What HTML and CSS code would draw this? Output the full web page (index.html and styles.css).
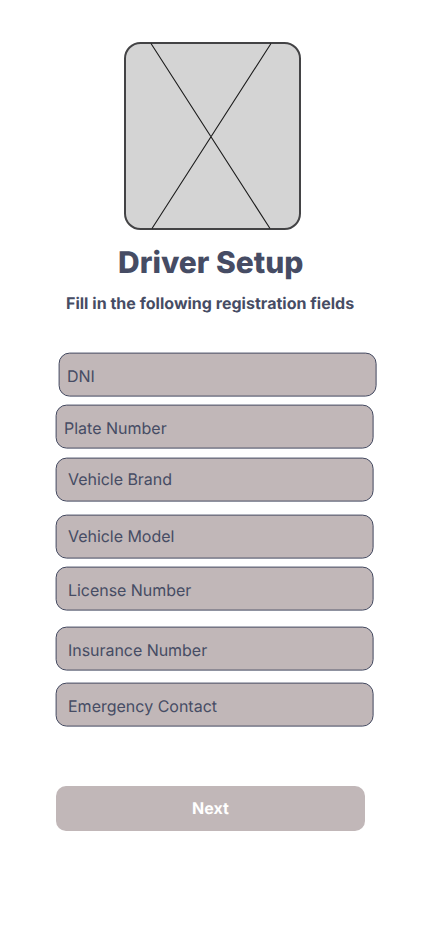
FILE: index.html
```html
<!DOCTYPE html>
<html lang="en">
<head>
<meta charset="utf-8">
<title>Driver Setup</title>
<link rel="stylesheet" href="styles.css">
</head>
<body>
<main class="screen">
  <svg class="photo" viewBox="0 0 177 188" aria-hidden="true">
    <rect class="frame" x="1" y="1" width="175" height="186" rx="15.500"/>
    <path class="cross" d="M27 1.5 146 186.500M147 1.500 28 186.500"/>
  </svg>
  <h1 class="title">Driver Setup</h1>
  <p class="subtitle">Fill in the following registration fields</p>
  <form class="fields">
    <div class="field dni">DNI</div>
    <div class="field plate">Plate Number</div>
    <div class="field brand">Vehicle Brand</div>
    <div class="field model">Vehicle Model</div>
    <div class="field license">License Number</div>
    <div class="field insurance">Insurance Number</div>
    <div class="field contact">Emergency Contact</div>
    <button class="next" type="button">Next</button>
  </form>
</main>
</body>
</html>
```
FILE: styles.css
```css
*, *::before { box-sizing: border-box; }
body { margin: 0; background: #fff; color: #464c64; font-family: Inter, sans-serif; text-rendering: geometricPrecision; }
.screen { display: flex; flex-direction: column; height: 926px; padding-top: 42px; overflow: hidden; }
.photo { display: block; width: 177px; height: 188px; margin-left: 124px; }
.frame { fill: #d4d4d4; stroke: #434345; stroke-width: 2; }
.cross { fill: none; stroke: #1c1c1c; stroke-width: 1.1; }
.title { margin: 15px 0 0 118px; font-size: 30px; line-height: 36px; font-weight: 800; white-space: nowrap; }
.subtitle { margin: 12px 0 0 66px; font-size: 16px; line-height: 20px; font-weight: 700; letter-spacing: .02px; white-space: nowrap; }
.fields { display: flex; flex-direction: column; padding: 39px 0 0 55px; }
.field { position: relative; z-index: 0; width: 319px; height: 45px; padding: 14px 0 0 13px; font-size: 16px; line-height: 20px; letter-spacing: -.04px; }
.field::before { content: ""; position: absolute; z-index: -1; top: 0; left: 0; width: 318px; height: 44px; border: 1px solid #434960; border-radius: 11px; background: #c1b7b8; transform: translate(.6px, .6px); }
.dni { margin-left: 3px; padding-left: 9px; }
.plate { margin-top: 7px; padding-left: 9px; letter-spacing: 0; }
.brand { margin-top: 8px; padding-top: 12px; }
.model { margin-top: 12px; padding-top: 12px; }
.license { margin-top: 7px; }
.insurance { margin-top: 15px; }
.contact { margin-top: 11px; letter-spacing: 0; }
.next { width: 309px; height: 45px; margin: 59px 0 0 1px; padding: 0 0 1px; border: 0; border-radius: 10px; background: #c1b7b8; color: #fff; font: 700 16px/20px Inter, sans-serif; text-rendering: inherit; }
```
